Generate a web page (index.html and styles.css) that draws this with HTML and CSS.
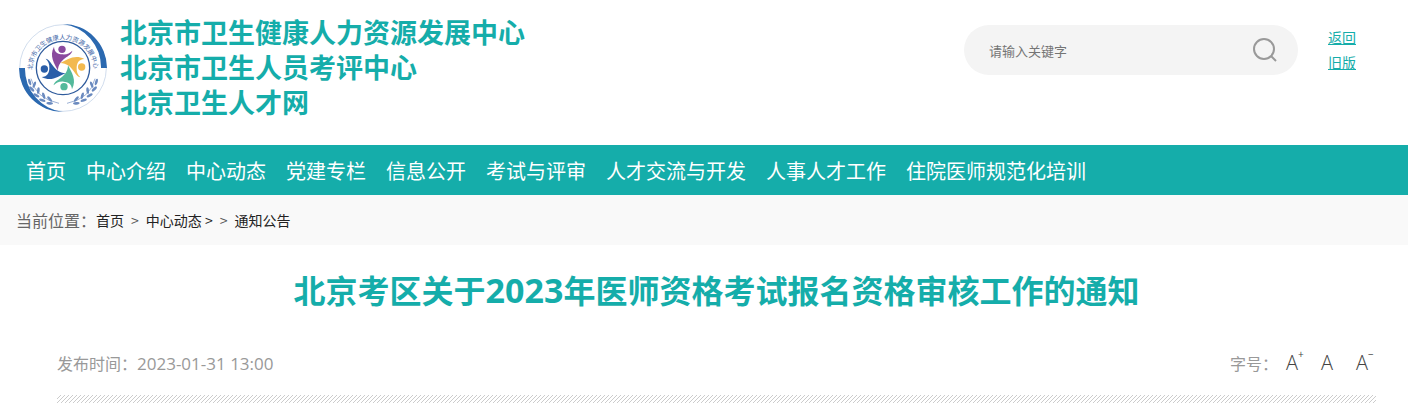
FILE: index.html
```html
<!DOCTYPE html>
<html lang="zh-CN">
<head>
  <meta charset="UTF-8">
  <meta name="viewport" content="width=device-width, initial-scale=1.0">
  <title>北京考区关于2023年医师资格考试报名资格审核工作的通知</title>
  <link rel="stylesheet" href="styles.css">
</head>
<body>
  <header class="header">
    <div class="brand">
      <svg class="emblem" viewBox="26 26 264 264" aria-hidden="true">
        <defs>
          <path id="ring-text" d="M66 164 A92 92 0 1 1 250 164"/>
          <path id="figure" d="M-27 -64 C-26 -46 -14 -42 -2 -41 C12 -40 20 -44 28 -52 C26 -34 -14 -30 -15 8 C-26 -14 -42 -36 -27 -64Z"/>
          <g id="leaves" fill="#6a8abf">
            <ellipse cx="58" cy="200" rx="10" ry="4" transform="rotate(75 58 200)"/>
            <ellipse cx="72" cy="208" rx="10" ry="4" transform="rotate(110 72 208)"/>
            <ellipse cx="64" cy="221" rx="10" ry="4" transform="rotate(45 64 221)"/>
            <ellipse cx="84" cy="226" rx="10" ry="4" transform="rotate(95 84 226)"/>
            <ellipse cx="78" cy="240" rx="10" ry="4" transform="rotate(30 78 240)"/>
            <ellipse cx="100" cy="241" rx="10" ry="4" transform="rotate(75 100 241)"/>
            <ellipse cx="96" cy="255" rx="10" ry="4" transform="rotate(18 96 255)"/>
            <ellipse cx="118" cy="251" rx="10" ry="4" transform="rotate(50 118 251)"/>
            <ellipse cx="118" cy="264" rx="10" ry="4" transform="rotate(5 118 264)"/>
            <path d="M62 190 Q76 250 146 264" fill="none" stroke="#6a8abf" stroke-width="2"/>
          </g>
        </defs>
        <circle cx="158" cy="158" r="130" fill="#fff" stroke="#b9cbe4" stroke-width="2"/>
        <path fill="#2b69b0" d="M26 158 A132 132 0 0 0 158 290 A130 130 0 0 1 44 158Z"/>
        <path fill="#2b69b0" d="M158 26 A132 132 0 0 1 290 158 L272 158 A130 130 0 0 0 158 26Z"/>
        <circle cx="158" cy="158" r="80" fill="#fff" stroke="#2f5b9c" stroke-width="4"/>
        <text class="emblem-text"><textPath href="#ring-text">北京市卫生健康人力资源发展中心</textPath></text>
        <use href="#leaves"/>
        <use href="#leaves" transform="translate(316 0) scale(-1 1)"/>
        <g transform="translate(158 158)">
          <g fill="#8a4a9e"><use href="#figure"/><circle cx="-3" cy="-56" r="11"/></g>
          <g fill="#f2b94f" transform="rotate(90)"><use href="#figure"/><circle cx="-3" cy="-56" r="11"/></g>
          <g fill="#53b99b" transform="rotate(180)"><use href="#figure"/><circle cx="-3" cy="-56" r="11"/></g>
          <g fill="#2a5ea8" transform="rotate(270)"><use href="#figure"/><circle cx="-3" cy="-56" r="11"/></g>
        </g>
      </svg>
      <div class="brand-names">
        <div>北京市卫生健康人力资源发展中心</div>
        <div>北京市卫生人员考评中心</div>
        <div>北京卫生人才网</div>
      </div>
    </div>
    <form class="search">
      <input class="search-input" type="text" aria-label="搜索" placeholder="请输入关键字">
      <button class="search-btn" type="button" aria-label="搜索">
        <svg width="24" height="24" viewBox="0 0 24 24" fill="none" stroke="#999" stroke-width="2">
          <circle cx="11" cy="11" r="10"/>
          <path d="M18 18 L23 23"/>
        </svg>
      </button>
    </form>
    <div class="old-links">
      <a href="#">返回</a>
      <a href="#">旧版</a>
    </div>
  </header>

  <nav class="nav">
    <a href="#">首页</a>
    <a href="#">中心介绍</a>
    <a href="#">中心动态</a>
    <a href="#">党建专栏</a>
    <a href="#">信息公开</a>
    <a href="#">考试与评审</a>
    <a href="#">人才交流与开发</a>
    <a href="#">人事人才工作</a>
    <a href="#">住院医师规范化培训</a>
  </nav>

  <div class="crumbs">
    <div class="crumbs-label">当前位置：</div>
    <div class="crumbs-path">
      <a href="#">首页</a>
      <span>&gt;</span>
      <a href="#">中心动态 &gt;</a>
      <span>&gt;</span>
      <a href="#">通知公告</a>
    </div>
  </div>

  <main class="article">
    <h1>北京考区关于<span class="year">2023</span>年医师资格考试报名资格审核工作的通知</h1>
    <div class="meta">
      <div>发布时间：<span class="date">2023-01-31 13:00</span></div>
      <div class="font-size">
        <span>字号：</span>
        <div class="font-size-btns">
          <button type="button">A<sup>+</sup></button>
          <button type="button">A</button>
          <button type="button">A<sup>−</sup></button>
        </div>
      </div>
    </div>
    <div class="stripes"></div>
  </main>
</body>
</html>
```
FILE: styles.css
```css
body {
  font-family: "Noto Sans CJK SC", sans-serif;
  margin: 0;
  background-color: #fff;
}

.header {
  display: flex;
  align-items: flex-start;
  height: 145px;
}

.brand {
  display: flex;
  flex: 1;
  padding-left: 19px;
}

.emblem {
  width: 88px;
  height: 88px;
  margin-top: 24px;
}

.emblem-text {
  font-size: 19px;
  fill: #3f68a8;
}

.brand-names {
  margin: 14px 0 0 13px;
  font-size: 27px;
  font-weight: bold;
  line-height: 35px;
  color: #15adaa;
  white-space: nowrap;
}

.search {
  display: flex;
  align-items: center;
  box-sizing: border-box;
  width: 334px;
  height: 50px;
  margin-top: 25px;
  padding: 0 21px 0 25px;
  border-radius: 25px;
  background-color: #f4f4f4;
}

.search-input {
  flex: 1;
  min-width: 0;
  padding: 0;
  border: none;
  outline: none;
  background: none;
  font-family: inherit;
  font-size: 13px;
}

.search-input::placeholder {
  color: #757575;
}

.search-btn {
  display: flex;
  padding: 0;
  border: none;
  background: none;
  cursor: pointer;
}

.old-links {
  display: flex;
  flex-direction: column;
  margin: 25px 52px 0 30px;
  font-size: 14px;
  line-height: 25px;
}

.old-links a {
  color: #15adaa;
}

.nav {
  display: flex;
  gap: 20px;
  padding: 1px 0 0 26px;
  background-color: #15adaa;
  font-size: 20px;
  line-height: 49px;
}

.nav a {
  color: #fff;
  text-decoration: none;
  white-space: nowrap;
}

.crumbs {
  display: flex;
  padding-left: 16px;
  background-color: #f9f9f9;
  line-height: 50px;
}

.crumbs-label {
  font-size: 16px;
  color: #666;
}

.crumbs-path {
  display: flex;
  gap: 7px;
  font-size: 14px;
  color: #555;
}

.crumbs-path a {
  color: #222;
  text-decoration: none;
}

.article {
  padding: 20px 32px 0 57px;
}

h1 {
  margin: 0;
  font-size: 32px;
  line-height: 48px;
  text-align: center;
  color: #15adaa;
}

.year {
  font-family: "Open Sans", sans-serif;
  font-size: 34px;
}

.meta {
  display: flex;
  justify-content: space-between;
  margin-top: 32px;
  font-size: 16px;
  line-height: 34px;
  color: #999;
}

.date {
  font-family: "Open Sans", sans-serif;
  font-size: 17px;
}

.font-size {
  display: flex;
  gap: 8px;
}

.font-size-btns {
  display: flex;
  gap: 15px;
}

.font-size button {
  display: flex;
  width: 20px;
  padding: 0;
  border: none;
  background: none;
  font-family: "Open Sans", sans-serif;
  font-size: 20px;
  font-weight: 300;
  line-height: 34px;
  color: #444;
  cursor: pointer;
}

.font-size sup {
  font-size: 10px;
  font-weight: 400;
  line-height: 16px;
}

.stripes {
  height: 8px;
  margin-top: 14px;
  background: linear-gradient(135deg, #fff 37.5%, #ccc 37.5% 50%, #fff 50% 87.5%, #ccc 87.5%) 0 0 / 4px 4px;
}
```
